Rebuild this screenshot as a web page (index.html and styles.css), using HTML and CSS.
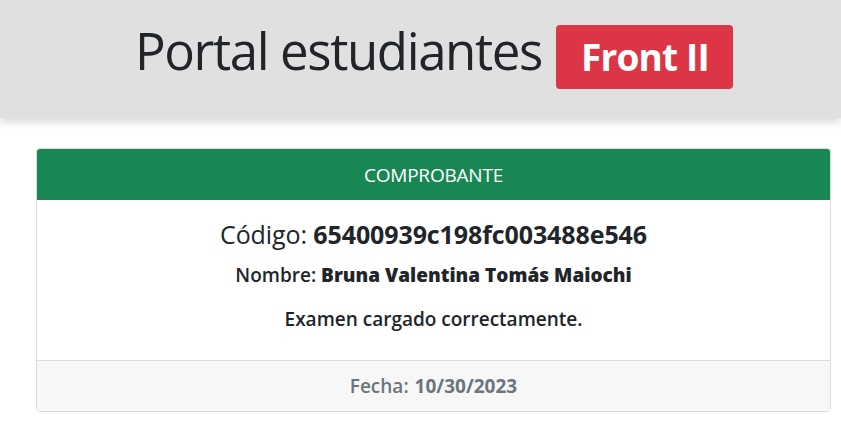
FILE: index.html
```html
<!DOCTYPE html>
<html lang="es">
<head>
<meta charset="utf-8">
<title>Portal estudiantes</title>
<link rel="stylesheet" href="styles.css">
</head>
<body>
<header class="topbar">
  <h1 class="title"><span class="title-text">Portal estudiantes</span> <span class="badge">Front II</span></h1>
</header>
<main class="content">
  <section class="card">
    <div class="card-header">COMPROBANTE</div>
    <div class="card-body">
      <p class="code">Código: <strong>65400939c198fc003488e546</strong></p>
      <p class="name">Nombre: <strong>Bruna Valentina Tomás Maiochi</strong></p>
      <p class="msg">Examen cargado correctamente.</p>
    </div>
    <div class="card-footer">Fecha: <strong>10/30/2023</strong></div>
  </section>
</main>
</body>
</html>
```
FILE: styles.css
```css
* { box-sizing: border-box; }
body {
  margin: 0;
  font-family: "Open Sans", "Noto Sans", sans-serif;
  color: #212529;
  background: #fff;
}
.topbar {
  background: #e0e0e0;
  height: 118px;
  padding: 0 0 5px 27px;
  display: flex;
  align-items: center;
  justify-content: center;
  box-shadow: 0 4px 8px rgba(0,0,0,0.15);
}
.title {
  margin: 0;
  font-weight: 400;
  display: flex;
  align-items: center;
  gap: 14px;
}
.title-text {
  font-size: 51px;
  letter-spacing: -1.4px;
  line-height: 1.2;
  padding-bottom: 11px;
}
.badge {
  background: #dc3545;
  color: #fff;
  font-weight: 700;
  font-size: 37px;
  border-radius: 4px;
  height: 64px;
  padding: 0 24px 0 25px;
  display: inline-flex;
  align-items: center;
  letter-spacing: -0.8px;
}
.content {
  padding: 30px 10px 0 36px;
}
.card {
  border: 1px solid #dcdcdc;
  border-radius: 4px;
  overflow: hidden;
}
.card-header {
  background: #198754;
  color: #fff;
  height: 51px;
  display: flex;
  align-items: center;
  justify-content: center;
  font-size: 19px;
  letter-spacing: -0.2px;
}
.card-body {
  padding: 18px 16px 0;
  height: 160px;
  text-align: center;
}
.card-body p { margin: 0; }
.code { font-size: 25px; line-height: 32px; letter-spacing: -0.1px; }
.code strong { font-weight: 700; }
.name { font-size: 19px; font-weight: 600; margin-top: 12px !important; line-height: 26px; }
.msg { font-size: 19px; font-weight: 600; margin-top: 18px !important; line-height: 26px; }
.card-footer {
  background: #f7f7f7;
  border-top: 1px solid #dcdcdc;
  height: 51px;
  display: flex;
  align-items: center;
  justify-content: center;
  color: #6c757d;
  font-size: 19px;
  font-weight: 600;
}
.card-footer strong { margin-left: 6px; font-weight: 700; }
```
